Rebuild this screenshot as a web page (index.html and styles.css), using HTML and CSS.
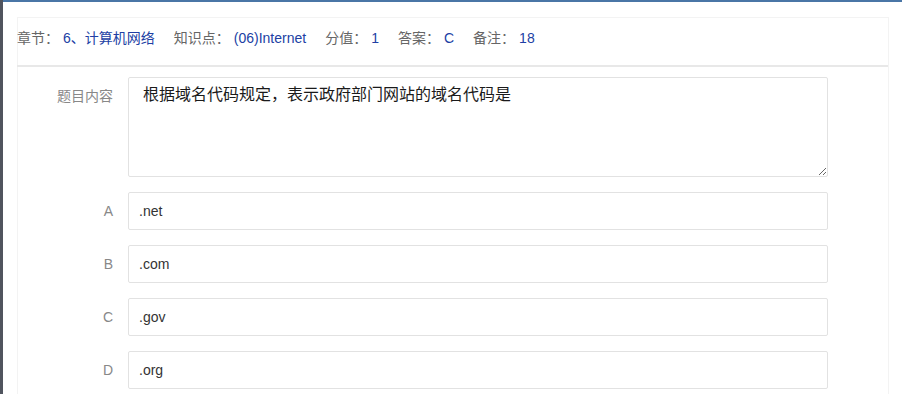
FILE: index.html
```html
<!DOCTYPE html>
<html lang="zh-CN">
<head>
    <meta charset="UTF-8">
    <title>题目详情</title>
    <link rel="stylesheet" href="styles.css">
</head>
<body>
    <div class="side-strip"></div>
    <div class="main">
        <div class="card">
            <div class="meta">
                <span class="meta-item"><span class="meta-label">章节：</span><span class="meta-value">6、计算机网络</span></span>
                <span class="meta-item"><span class="meta-label">知识点：</span><span class="meta-value">(06)Internet</span></span>
                <span class="meta-item"><span class="meta-label">分值：</span><span class="meta-value">1</span></span>
                <span class="meta-item"><span class="meta-label">答案：</span><span class="meta-value">C</span></span>
                <span class="meta-item"><span class="meta-label">备注：</span><span class="meta-value">18</span></span>
            </div>

            <div class="form">
                <div class="form-row">
                    <label class="form-label">题目内容</label>
                    <textarea class="form-textarea">根据域名代码规定，表示政府部门网站的域名代码是</textarea>
                </div>
                <div class="form-row">
                    <label class="form-label">A</label>
                    <input class="form-input" type="text" value=".net">
                </div>
                <div class="form-row">
                    <label class="form-label">B</label>
                    <input class="form-input" type="text" value=".com">
                </div>
                <div class="form-row">
                    <label class="form-label">C</label>
                    <input class="form-input" type="text" value=".gov">
                </div>
                <div class="form-row">
                    <label class="form-label">D</label>
                    <input class="form-input" type="text" value=".org">
                </div>
            </div>
        </div>
    </div>
</body>
</html>
```

FILE: styles.css
```css
html, body {
    height: 100%;
}
body {
    margin: 0;
    display: flex;
    background-color: #ffffff;
    font-family: "Liberation Sans", "Noto Sans CJK SC", sans-serif;
    overflow: hidden;
}
.side-strip {
    width: 3px;
    flex-shrink: 0;
    background-color: #50545e;
}
.main {
    flex: 1;
    border-top: 2px solid #4a76a6;
    padding: 15px 13px 0 14px;
}
.card {
    border: 1px solid #f3f3f3;
    border-bottom: none;
    height: 100%;
    box-sizing: border-box;
}

/* header line with chapter / point / score */
.meta {
    display: flex;
    gap: 19px;
    padding: 10px 0 17px 0;
    line-height: 20px;
    font-size: 14px;
    border-bottom: 2px solid #e8e8e8;
    margin-left: -1px;
}
.meta-label {
    color: #666666;
    margin-right: 4px;
}
.meta-value {
    color: #213fa4;
}

.form {
    display: flex;
    flex-direction: column;
    gap: 15px;
    padding-top: 10px;
}
.form-row {
    display: flex;
    align-items: flex-start;
}
.form-label {
    width: 95px;
    padding-right: 15px;
    text-align: right;
    color: #888888;
    font-size: 14px;
    line-height: 20px;
    padding-top: 9px;
    flex-shrink: 0;
}
.form-textarea {
    width: 700px;
    height: 100px;
    box-sizing: border-box;
    border: 1px solid #e2e2e2;
    border-radius: 2px;
    padding: 6px 14px;
    font-family: inherit;
    font-size: 16px;
    line-height: 22px;
    color: #1a1a1a;
    resize: vertical;
    margin: 0;
}
.form-input {
    width: 700px;
    height: 38px;
    box-sizing: border-box;
    border: 1px solid #e2e2e2;
    border-radius: 2px;
    padding: 0 10px;
    font-family: inherit;
    font-size: 14px;
    color: #333333;
    margin: 0;
}
```
